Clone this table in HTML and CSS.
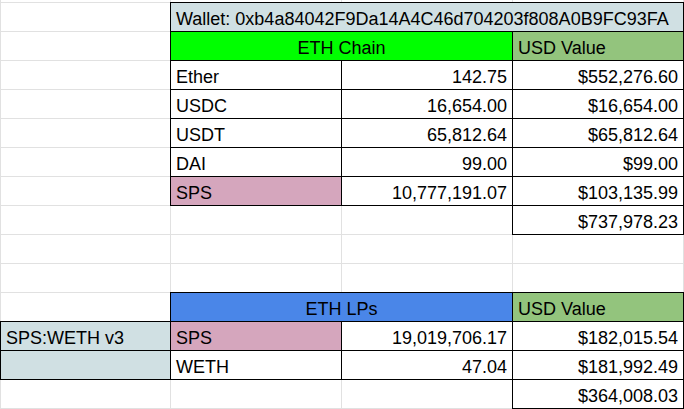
FILE: index.html
```html
<!DOCTYPE html>
<html>
<head>
<meta charset="utf-8">
<link rel="stylesheet" href="styles.css">
</head>
<body>
<div class="sheet">
  <!-- row 0 (sliver) -->
  <div class="c"></div><div class="c"></div><div class="c"></div><div class="c"></div>
  <!-- row 1 -->
  <div class="c"></div>
  <div class="c box wallet span3">Wallet: 0xb4a84042F9Da14A4C46d704203f808A0B9FC93FA</div>
  <!-- row 2 -->
  <div class="c"></div>
  <div class="c box green span2 center">ETH Chain</div>
  <div class="c box usd">USD Value</div>
  <!-- row 3 -->
  <div class="c"></div>
  <div class="c box">Ether</div>
  <div class="c box num">142.75</div>
  <div class="c box num">$552,276.60</div>
  <!-- row 4 -->
  <div class="c"></div>
  <div class="c box">USDC</div>
  <div class="c box num">16,654.00</div>
  <div class="c box num">$16,654.00</div>
  <!-- row 5 -->
  <div class="c"></div>
  <div class="c box">USDT</div>
  <div class="c box num">65,812.64</div>
  <div class="c box num">$65,812.64</div>
  <!-- row 6 -->
  <div class="c"></div>
  <div class="c box">DAI</div>
  <div class="c box num">99.00</div>
  <div class="c box num">$99.00</div>
  <!-- row 7 -->
  <div class="c"></div>
  <div class="c box pink">SPS</div>
  <div class="c box num">10,777,191.07</div>
  <div class="c box num">$103,135.99</div>
  <!-- row 8 -->
  <div class="c"></div><div class="c"></div><div class="c"></div>
  <div class="c box num">$737,978.23</div>
  <!-- row 9 -->
  <div class="c"></div><div class="c"></div><div class="c"></div><div class="c"></div>
  <!-- row 10 -->
  <div class="c"></div><div class="c"></div><div class="c"></div><div class="c"></div>
  <!-- row 11 -->
  <div class="c"></div>
  <div class="c box blue span2 center">ETH LPs</div>
  <div class="c box usd">USD Value</div>
  <!-- row 12 -->
  <div class="c box wallet">SPS:WETH v3</div>
  <div class="c box pink">SPS</div>
  <div class="c box num">19,019,706.17</div>
  <div class="c box num">$182,015.54</div>
  <!-- row 13 -->
  <div class="c box wallet"></div>
  <div class="c box">WETH</div>
  <div class="c box num">47.04</div>
  <div class="c box num">$181,992.49</div>
  <!-- row 14 -->
  <div class="c"></div><div class="c"></div><div class="c"></div>
  <div class="c box num">$364,008.03</div>
</div>
</body>
</html>
```
FILE: styles.css
```css
html, body {
  margin: 0;
  padding: 0;
  background: #fff;
}
.sheet {
  display: grid;
  grid-template-columns: 169px 170px 170px 170px;
  grid-template-rows: 2px repeat(14, 28px);
  gap: 1px;
  padding: 0 1px 1px 1px;
  background: #e1e1e1;
  width: 682px;
  font-family: "Liberation Sans", Arial, sans-serif;
  font-size: 18px;
  color: #000;
}
.c {
  background: #fff;
  display: flex;
  align-items: flex-end;
  padding: 0 5px 1px 5px;
  white-space: nowrap;
  overflow: hidden;
  line-height: 22px;
}
.sheet > .c:nth-child(-n+4) {
  padding: 0;
}
.box {
  box-shadow: 0 0 0 1px #000;
  position: relative;
}
.span3 { grid-column: span 3; }
.span2 { grid-column: span 2; }
.center { justify-content: center; }
.num { justify-content: flex-end; }
.wallet { background: #d0e0e3; }
.green { background: #00ff00; }
.usd { background: #93c47d; }
.pink { background: #d5a6bd; }
.blue { background: #4a86e8; }
```
